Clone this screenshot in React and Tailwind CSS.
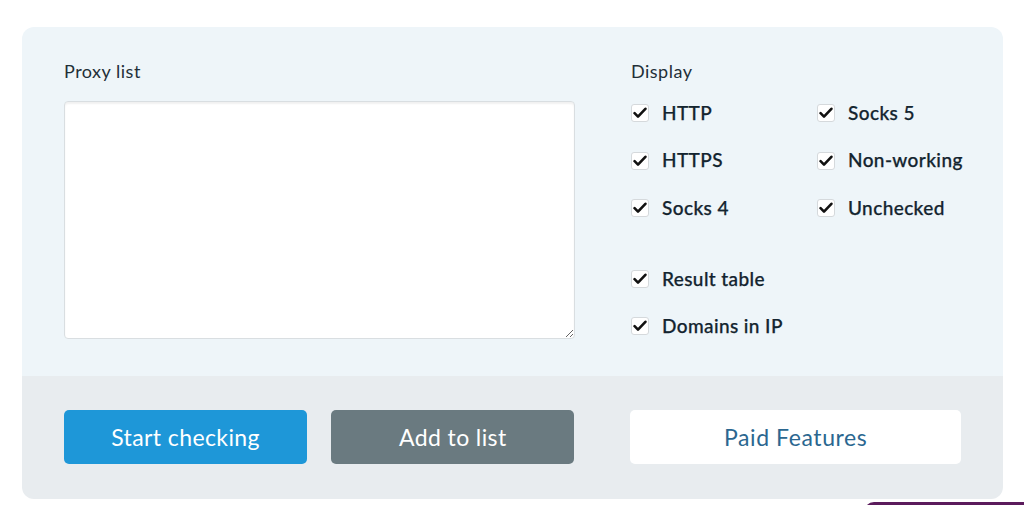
import { useState } from "react";

const font = { fontFamily: "Lato, 'Open Sans', sans-serif" };

function Check({ label, checked, onToggle }) {
  return (
    <label className="flex items-center gap-[13px] h-[24px] cursor-pointer select-none whitespace-nowrap">
      <span
        onClick={onToggle}
        className="shrink-0 w-[18px] h-[18px] bg-white border border-[#d5d9dc] rounded-[3px] flex items-center justify-center"
      >
        {checked && (
          <svg width="14" height="12" viewBox="0 0 14 12">
            <path d="M1.6 6.2 L5 9.6 L12.4 1.8" fill="none" stroke="#111" strokeWidth="2.6" strokeLinecap="round" strokeLinejoin="round" />
          </svg>
        )}
      </span>
      <span className="text-[19px] font-medium text-[#13242f] tracking-[0.4px] [-webkit-text-stroke:0.25px_#13242f]">{label}</span>
    </label>
  );
}

function App() {
  const [opts, setOpts] = useState({
    http: true,
    socks5: true,
    https: true,
    nonworking: true,
    socks4: true,
    unchecked: true,
    result: true,
    domains: true,
  });
  const toggle = (k) => setOpts((o) => ({ ...o, [k]: !o[k] }));

  return (
    <div className="bg-white min-h-screen pt-[27px] px-[22px] relative" style={font}>
      <div className="w-[981px] rounded-[12px] overflow-hidden">
        <div className="bg-[#eef5f9] pt-[33px] pb-[37px] px-[42px] flex gap-[56px]">
          <div className="w-[511px]">
            <p className="text-[18px] text-[#1f2f38] leading-[22px] tracking-[0.5px] mb-[19px]">Proxy list</p>
            <textarea className="w-full h-[238px] block bg-white border border-[#d9dee1] rounded-[4px] shadow-[inset_0_2px_2px_rgba(0,0,0,0.06)] outline-none p-2 text-sm" />
          </div>
          <div className="w-[330px]">
            <p className="text-[18px] text-[#1f2f38] leading-[22px] tracking-[0.5px] mb-[19px]">Display</p>
            <div className="grid grid-cols-[186px_1fr] gap-y-[23.5px]">
              <Check label="HTTP" checked={opts.http} onToggle={() => toggle("http")} />
              <Check label="Socks 5" checked={opts.socks5} onToggle={() => toggle("socks5")} />
              <Check label="HTTPS" checked={opts.https} onToggle={() => toggle("https")} />
              <Check label="Non-working" checked={opts.nonworking} onToggle={() => toggle("nonworking")} />
              <Check label="Socks 4" checked={opts.socks4} onToggle={() => toggle("socks4")} />
              <Check label="Unchecked" checked={opts.unchecked} onToggle={() => toggle("unchecked")} />
            </div>
            <div className="flex flex-col gap-[23px] mt-[47px]">
              <Check label="Result table" checked={opts.result} onToggle={() => toggle("result")} />
              <Check label="Domains in IP" checked={opts.domains} onToggle={() => toggle("domains")} />
            </div>
          </div>
        </div>
        <div className="bg-[#e8ecef] pt-[34px] pb-[35px] px-[42px] flex gap-[56px]">
          <div className="w-[511px] flex gap-[24px]">
            <button className="flex-1 h-[54px] rounded-[5px] bg-[#1e97d8] text-white text-[23px] tracking-[0.4px]">Start checking</button>
            <button className="flex-1 h-[54px] rounded-[5px] bg-[#6a7a80] text-white text-[23px] tracking-[0.4px]">Add to list</button>
          </div>
          <button className="w-[331px] h-[54px] rounded-[5px] bg-white text-[#2b6790] text-[23px] tracking-[0.6px]">Paid Features</button>
        </div>
      </div>
      <div className="absolute left-[864px] top-[502px] w-[180px] h-[20px] rounded-tl-[10px] bg-[#5b1b5c]" />
    </div>
  );
}

export default App;
